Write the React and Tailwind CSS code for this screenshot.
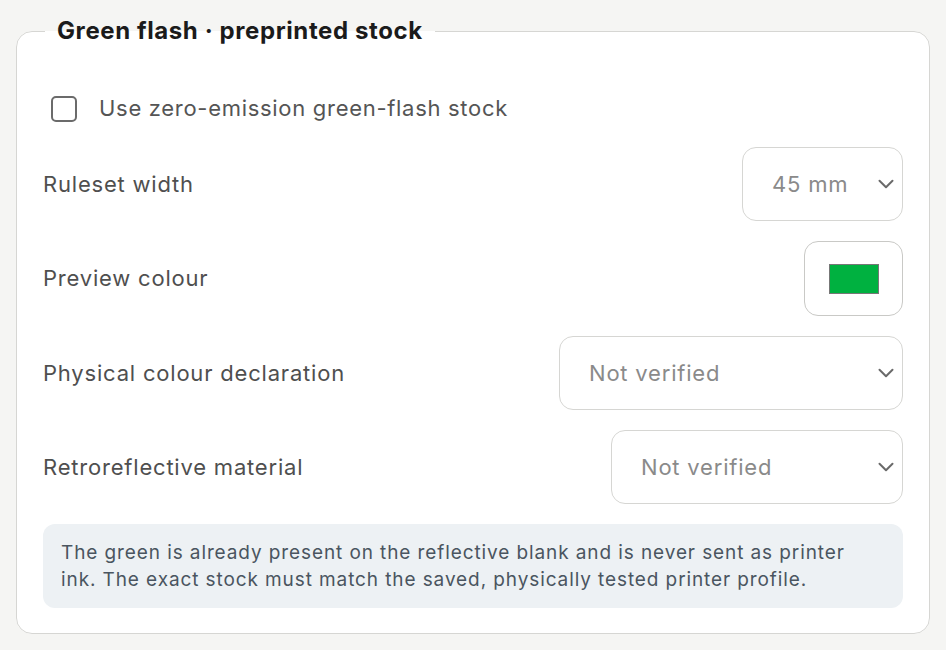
import React, { useState } from 'react';

const rows = [
  { label: 'Physical colour declaration', width: 'w-[344px]' },
  { label: 'Retroreflective material', width: 'w-[292px]' },
];

function Chevron() {
  return (
    <svg width="16" height="10" viewBox="0 0 16 10" fill="none" className="shrink-0">
      <path d="M1.5 1.8 8 8.2l6.5-6.4" stroke="#6a6a6a" strokeWidth="2" strokeLinecap="round" strokeLinejoin="round" />
    </svg>
  );
}

function SelectBox({ value, className }) {
  return (
    <div className={`h-[74px] rounded-[14px] border border-[#d6d6d3] bg-white flex items-center justify-between pl-[29px] pr-[8px] ${className}`}>
      <span className="text-[22px] tracking-[0.8px] text-[#8a8a8a]">{value}</span>
      <Chevron />
    </div>
  );
}

export default function App() {
  const [useStock, setUseStock] = useState(false);

  return (
    <div className="min-h-[650px] bg-[#f5f5f3] p-4 font-['Inter',sans-serif]">
      <fieldset className="h-[618px] rounded-[16px] border border-[#d6d6d3] bg-white px-[26px] pb-[28px]">
        <legend className="ml-[2px] px-3 text-[24px] font-bold leading-[30px] tracking-[0.6px] text-[#1b1b1b]">
          Green flash · preprinted stock
        </legend>

        <label className="mt-[46px] flex items-center gap-[22px] pl-[8px] cursor-pointer">
          <span
            onClick={() => setUseStock(!useStock)}
            className="w-[26px] h-[26px] rounded-[5px] border-2 border-[#6b6b6b] bg-white"
          />
          <span className="text-[22px] tracking-[0.7px] text-[#555555]">Use zero-emission green-flash stock</span>
        </label>

        <div className="mt-[22px] flex flex-col gap-[20px]">
          <div className="flex items-center justify-between">
            <span className="text-[22px] tracking-[0.8px] text-[#4f4f4f]">Ruleset width</span>
            <SelectBox value="45 mm" className="w-[161px]" />
          </div>

          <div className="flex items-center justify-between">
            <span className="text-[22px] tracking-[0.8px] text-[#4f4f4f]">Preview colour</span>
            <div className="w-[99px] h-[75px] rounded-[14px] border border-[#c9c9c6] bg-white flex items-center justify-center">
              <div className="w-[50px] h-[30px] bg-[#00b140] border border-[#777777]" />
            </div>
          </div>

          {rows.map((row) => (
            <div key={row.label} className="flex items-center justify-between">
              <span className="text-[22px] tracking-[0.8px] text-[#4f4f4f]">{row.label}</span>
              <SelectBox value="Not verified" className={row.width} />
            </div>
          ))}

          <div className="rounded-[12px] bg-[#edf1f4] pl-[18px] pr-[30px] py-[15px] text-[19px] leading-[27px] tracking-[0.9px] text-[#4a5560]">
            The green is already present on the reflective blank and is never sent as printer ink. The exact stock must match the saved, physically tested printer profile.
          </div>
        </div>
      </fieldset>
    </div>
  );
}
